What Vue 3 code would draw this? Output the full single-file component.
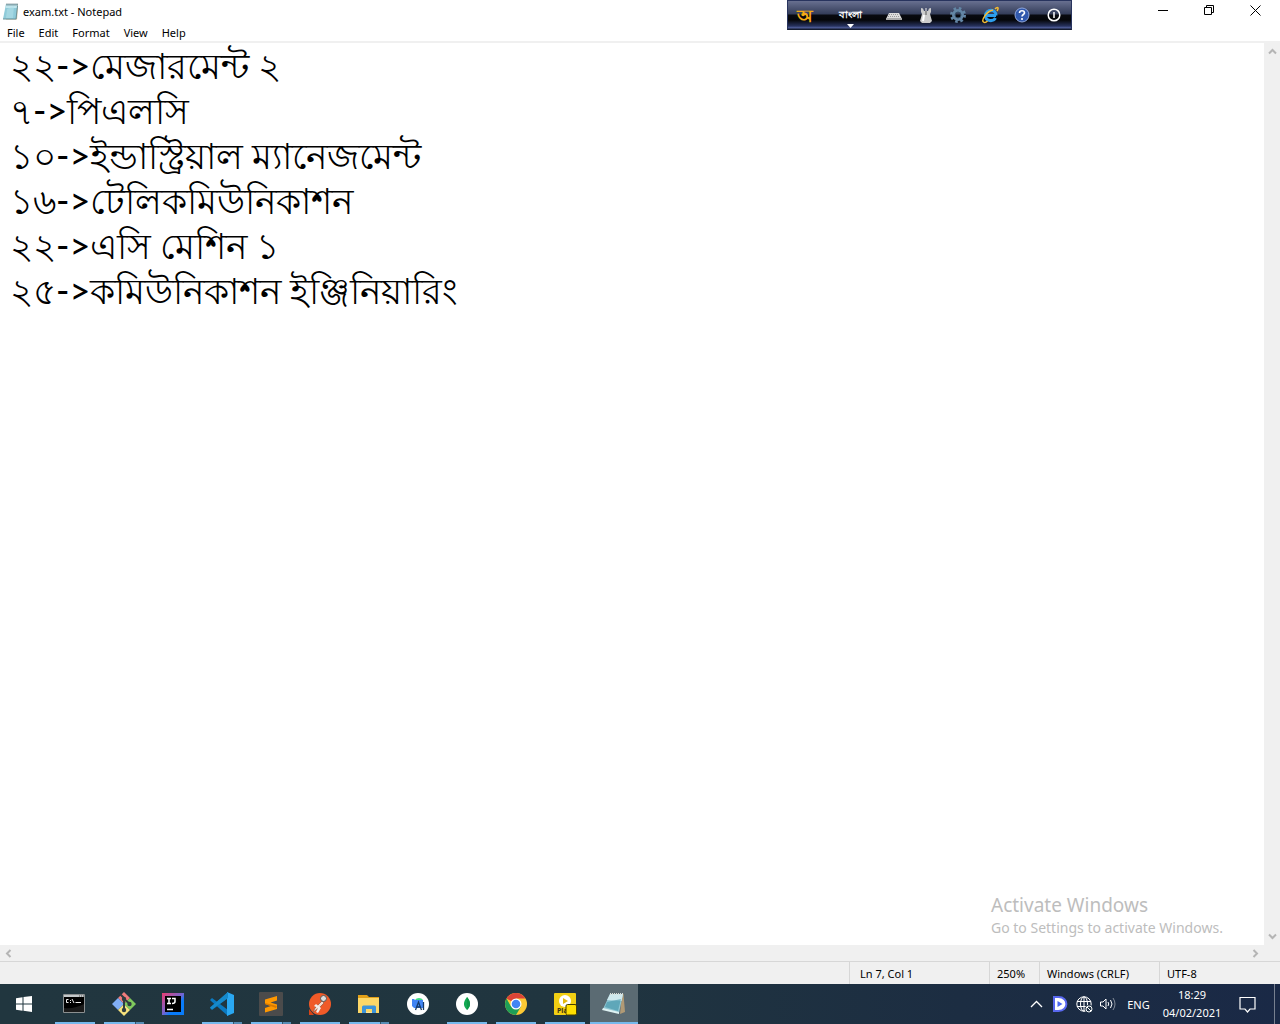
<script setup>
import { ref } from 'vue'

const text = ref(`২২->মেজারমেন্ট ২
৭->পিএলসি
১০->ইন্ডাস্ট্রিয়াল ম্যানেজমেন্ট
১৬->টেলিকমিউনিকাশন
২২->এসি মেশিন ১
২৫->কমিউনিকাশন ইঞ্জিনিয়ারিং
`)

const menus = ['File', 'Edit', 'Format', 'View', 'Help']

const apps = [
  { id: 'cmd', name: 'Command Prompt', state: 'open' },
  { id: 'git', name: 'Git Bash', state: 'multi' },
  { id: 'idea', name: 'IntelliJ IDEA', state: '' },
  { id: 'code', name: 'Visual Studio Code', state: 'multi' },
  { id: 'sublime', name: 'Sublime Text', state: 'multi' },
  { id: 'postman', name: 'Postman', state: 'open' },
  { id: 'folder', name: 'File Explorer', state: 'multi' },
  { id: 'studio', name: 'Android Studio', state: '' },
  { id: 'mongo', name: 'MongoDB Compass', state: 'open' },
  { id: 'chrome', name: 'Google Chrome', state: 'open' },
  { id: 'player', name: 'Player', state: 'open' },
  { id: 'notepad', name: 'Notepad', state: 'active' },
]
</script>

<template>
  <div class="desktop">
    <header class="titlebar">
      <svg class="app-icon" width="16" height="18" viewBox="0 0 16 18">
        <path d="M3 1h12l-1 15.500H3z" fill="#c9b58c" />
        <path d="M3 1h11.500L13 16H0z" fill="#8fcbd9" />
        <path d="M3 1h11.500l-.4 4H2.500z" fill="#bfe5ed" />
        <path d="M4 6l7-3-1 12H3z" fill="#b2dfe8" opacity=".6" />
        <path d="M3.500 1.500h11" stroke="#4e6870" stroke-width="2" stroke-dasharray="1 1" />
        <path d="M0 16h13l1.500-13" fill="none" stroke="#6a929c" />
      </svg>
      <h1>exam.txt - Notepad</h1>
      <div class="controls">
        <button aria-label="Minimize"><svg width="11" height="11"><path d="M0 5.500h10" stroke="#000" /></svg></button>
        <button aria-label="Restore"><svg width="11" height="11" fill="none" stroke="#000"><path d="M.5 2.500h7v7h-7zM2.500 2.500v-2h7v7h-2" /></svg></button>
        <button aria-label="Close"><svg width="11" height="11" stroke="#000"><path d="M.5.5l10 10M10.500.5l-10 10" /></svg></button>
      </div>
    </header>

    <nav class="menubar">
      <button v-for="m in menus" :key="m">{{ m }}</button>
    </nav>

    <main class="editor">
      <textarea v-model="text" aria-label="Text editor" spellcheck="false" wrap="off"></textarea>
      <div class="vscroll">
        <button aria-label="Scroll up"><svg width="9" height="7" class="arrow"><path d="M1 5.500l3.500-3.500L8 5.500" /></svg></button>
        <button aria-label="Scroll down"><svg width="9" height="7" class="arrow"><path d="M1 1.500l3.500 3.500L8 1.500" /></svg></button>
      </div>
      <aside class="watermark">
        <strong>Activate Windows</strong>
        <span>Go to Settings to activate Windows.</span>
      </aside>
    </main>

    <div class="hscroll">
      <button aria-label="Scroll left"><svg width="7" height="9" class="arrow"><path d="M5.500 1L2 4.500 5.500 8" /></svg></button>
      <button aria-label="Scroll right"><svg width="7" height="9" class="arrow"><path d="M1.500 1L5 4.500 1.500 8" /></svg></button>
    </div>

    <footer class="statusbar">
      <span class="position">Ln 7, Col 1</span>
      <span class="zoom">250%</span>
      <span class="ending">Windows (CRLF)</span>
      <span class="encoding">UTF-8</span>
    </footer>

    <div class="keyboard-bar">
      <button class="logo">অ</button>
      <button class="lang">বাংলা<svg width="7" height="4"><path d="M0 0h7L3.500 4z" fill="#fff" /></svg></button>
      <button aria-label="Layout">
        <svg width="16" height="16" viewBox="0 0 16 16">
          <path d="M3 6h10l2.500 5H.5z" fill="#ddd" /><path d="M0 11h16v2H0z" fill="#aaa" />
          <path d="M3 7.500h10M2 9.500h12" stroke="#999" stroke-dasharray="1 1" />
        </svg>
      </button>
      <button aria-label="Mouse">
        <svg width="16" height="16" viewBox="0 0 16 16">
          <path d="M3 1l2 .5L6 4h4l1-2.500 2-.5v4l-1 2 2 7-2 2H4l-2-2 2-7-1-2z" fill="#ccc" />
          <path d="M6 8l-1 6" stroke="#fff" stroke-width="2" /><path d="M8 1v3" stroke="#eee" /><path d="M8 4v4" stroke="#555" />
        </svg>
      </button>
      <button aria-label="Options">
        <svg width="16" height="16" viewBox="0 0 16 16" fill="none" stroke="#6386a5">
          <circle cx="8" cy="8" r="6.500" stroke-width="3" stroke-dasharray="2.500 2.605" />
          <circle cx="8" cy="8" r="4.500" stroke-width="3" /><circle cx="8" cy="8" r="3" stroke="#38526b" />
        </svg>
      </button>
      <button aria-label="Website">
        <svg width="18" height="18" viewBox="0 0 18 18" fill="none">
          <path d="M15 9.500H5M15 9.500c0-7-10-7-10.500 0 0 6 7.500 6.500 10 2.500" stroke="#2d9eec" stroke-width="3" />
          <path d="M14 3c3-3 4-1 2 2M12 4C6 5 0 14 2.500 16c1 .7 3 0 4-1" stroke="#f6bd32" stroke-width="1.500" />
        </svg>
      </button>
      <button aria-label="Help">
        <svg width="16" height="16" viewBox="0 0 16 16">
          <circle cx="8" cy="8" r="7" fill="#3159ad" stroke="#91a7db" />
          <path d="M5.500 6c0-3 5-3 5 0 0 1.500-2.500 1.500-2.500 3.500M8 11v2" fill="none" stroke="#fff" stroke-width="1.600" />
        </svg>
      </button>
      <button aria-label="Exit">
        <svg width="14" height="14" viewBox="0 0 14 14" fill="none" stroke="#fff" stroke-width="1.500">
          <circle cx="7" cy="7" r="5.800" /><path d="M7 4v6" />
        </svg>
      </button>
    </div>

    <div class="taskbar">
      <button class="start" aria-label="Start">
        <svg width="16" height="16" viewBox="0 0 16 16" fill="#fff"><path d="M0 2.200L6.500 1.300V7.500H0zM7.500 1.100L16 0v7.500H7.500zM0 8.500h6.500v6.200L0 13.800zM7.500 8.500H16V16l-8.500-1.200z" /></svg>
      </button>
      <button v-for="app in apps" :key="app.id" class="task" :class="app.state" :aria-label="app.name">
        <svg width="24" height="24" viewBox="0 0 24 24">
          <g v-if="app.id === 'cmd'">
            <path d="M.5 2.500h21v18H.5z" fill="#000" stroke="#8b8f90" /><path d="M1 3h20v2H1z" fill="#c4c8ca" />
            <path d="M16 4h1m1 0h1m1 0h1" stroke="#555" />
            <path d="M5.500 7.500h-2v3h2M7.500 8v1m0 1v1M9 7l2 4M12.500 10.500H18" fill="none" stroke="#eee" />
            <path d="M1 16c7 1 14-1 20-4v8H1z" fill="#1b1b1b" />
          </g>
          <g v-else-if="app.id === 'git'">
            <path d="M12 0l6 6-6 6-6-6z" fill="#f27c7c" /><path d="M18 6l6 6-6 6-6-6z" fill="#7fc95d" />
            <path d="M6 6l6 6-6 6-6-6z" fill="#80aef5" /><path d="M12 12l6 6-6 6-6-6z" fill="#f6e17c" />
            <path d="M8 2l4 4v12M12 7l6 5" fill="none" stroke="#303c40" stroke-width="2" />
            <circle cx="12" cy="7" r="2.200" fill="#303c40" /><circle cx="12" cy="18" r="2.200" fill="#303c40" /><circle cx="17.500" cy="12" r="2.200" fill="#303c40" />
          </g>
          <g v-else-if="app.id === 'idea'">
            <defs><linearGradient id="idea" x2="1" y2="1"><stop stop-color="#ed3d70" /><stop offset=".5" stop-color="#7065d2" /><stop offset=".65" stop-color="#087cfa" /></linearGradient></defs>
            <path d="M1 1h22v22H1z" fill="url(#idea)" /><path d="M4 4h16v16H4z" fill="#000" />
            <path d="M6 6.500h4M6 11.500h4M8 6v5M11 6.500h3v3q0 2-3 2M6 17.500h6" fill="none" stroke="#fff" stroke-width="1.500" />
          </g>
          <g v-else-if="app.id === 'code'">
            <path d="M0 8l2-2 16 12v6L1 9z" fill="#0b7ac2" /><path d="M0 16l2 2L18 6V0L1 15z" fill="#0875b9" />
            <path d="M17 0l7 3v18l-7 3z" fill="#2aa8f2" /><path d="M0 15.500l2 2L18 6V0z" fill="#168acb" />
          </g>
          <g v-else-if="app.id === 'sublime'">
            <rect width="24" height="24" rx="1" fill="#4b4b4b" />
            <path d="M18 4v4.500L11.500 10.500 18 12.500V17L6 20.500V16l6-2-6-2V7.500z" fill="#ff9800" />
            <path d="M6 11l12 3-1 2-11-4z" fill="#d97900" />
          </g>
          <g v-else-if="app.id === 'postman'">
            <circle cx="12" cy="12" r="11" fill="#f05a28" /><path d="M1 17v6h5z" fill="#d64418" />
            <path d="M14 9l-7 7-2 4 6-4 5-5z" fill="#f8d7c8" stroke="#8b5b48" stroke-width=".7" />
            <circle cx="15.500" cy="6.500" r="3" fill="#ddd" stroke="#555" /><path d="M8 12l5 4-3 5-2-1 2-4-4-2z" fill="#eee" />
          </g>
          <g v-else-if="app.id === 'folder'">
            <path d="M1 3h9l2 2h10v5H1z" fill="#e2a018" /><path d="M1 6h21v15H1z" fill="#fcd767" />
            <path d="M5 21v-6q0-1.500 1.500-1.500h11q1.500 0 1.500 1.500v6h-4v-4H9v4z" fill="#3c94da" /><path d="M9 20h6v1H9z" fill="#ffe69c" />
          </g>
          <g v-else-if="app.id === 'studio'">
            <circle cx="12" cy="12" r="11" fill="#fff" /><path d="M9 8a4.500 3.500 0 018 0z" fill="#3ddc84" />
            <path d="M6 7h2l1 1h8v8H8l-2-2z" fill="#4285f4" /><path d="M9.500 18l3-8 3 8M10.500 15h4M17.500 10v8" fill="none" stroke="#173b69" stroke-width="1.300" />
          </g>
          <g v-else-if="app.id === 'mongo'">
            <circle cx="12" cy="12" r="11" fill="#fff" /><path d="M12 5c-5 6-3 10 0 13 3-3 5-7 0-13z" fill="#13aa52" />
            <path d="M12 5v13c4-4 4-8 0-13z" fill="#0f9a49" />
          </g>
          <g v-else-if="app.id === 'chrome'">
            <circle cx="12" cy="12" r="11" fill="#fcc934" />
            <path d="M12 12L2.500 6.500A11 11 0 0121.500 6.500H12z" fill="#db4437" />
            <path d="M2.500 6.500A11 11 0 0012 23l5-8.500L12 12 7 14.500z" fill="#1e9e57" />
            <circle cx="12" cy="12" r="5.500" fill="#fff" /><circle cx="12" cy="12" r="4.300" fill="#4285f4" />
          </g>
          <g v-else-if="app.id === 'player'">
            <rect x="1" y="1" width="22" height="22" rx="1" fill="#f2cf13" /><circle cx="12" cy="9" r="6" fill="#fff" />
            <path d="M10 6l5 3-5 3z" fill="#e5b90d" />
            <text x="4" y="21" font-size="7" font-weight="700" fill="#3b3514">Pla</text>
            <rect x="13" y="12.500" width="10.500" height="10.500" rx="1.500" fill="#ffdf00" stroke="#443c00" />
          </g>
          <g v-else>
            <path d="M20 2h1.500L23 20l-5 2z" fill="#b19a75" /><path d="M8 2h13l-4 19-16-4z" fill="#8fc6d3" />
            <path d="M8 2h13l-1.500 7L5 8z" fill="#cfe9ee" /><path d="M5 10l14-3-3 12-13-4z" fill="#3f93a8" opacity=".6" />
            <path d="M8 2h13" stroke="#d7ded9" stroke-width="2" stroke-dasharray="1 1" /><path d="M0 18l17 4v-2L1 16z" fill="#def2f3" />
          </g>
        </svg>
      </button>

      <div class="tray">
        <button class="chevron" aria-label="Show hidden icons"><svg width="13" height="8" fill="none" stroke="#fff" stroke-width="1.300"><path d="M1 7l5.500-5.500L12 7" /></svg></button>
        <button class="tray-app" aria-label="Download manager"><svg width="16" height="16" viewBox="0 0 16 16"><path d="M2 1h4.500c10.500 0 10.500 14 0 14H2z" fill="#fff" stroke="#5968ef" stroke-width="2" /><path d="M5.500 5l5 3-5 3z" fill="#4b68f1" /></svg></button>
        <button class="network" aria-label="Network"><svg width="17" height="17" viewBox="0 0 17 17" fill="none" stroke="#fff"><circle cx="8" cy="8" r="7.200" /><ellipse cx="8" cy="8" rx="3.500" ry="7.200" /><path d="M8 1v14M1 5.500h14M1 10.500h14" /><circle cx="13" cy="13" r="4" fill="#1b2e42" stroke="none" /><circle cx="13" cy="13" r="3" /><path d="M11 11l4 4" /></svg></button>
        <button class="volume" aria-label="Volume"><svg width="17" height="14" viewBox="0 0 17 14" fill="none" stroke="#fff"><path d="M.5 5h2.500L6 2v10L3 9H.5zM8 5q1.500 2 0 4M10.500 3q3 4 0 8" /><path d="M13 1q4 6 0 12" opacity=".45" /></svg></button>
        <button class="input-lang">ENG</button>
        <button class="clock"><time>18:29</time><time>04/02/2021</time></button>
        <button class="notice" aria-label="Notifications"><svg width="17" height="17" fill="none" stroke="#fff" stroke-width="1.200"><path d="M1 1.500h15v11.500h-5l-2.500 3-2.500-3H1z" /></svg></button>
        <button class="peek" aria-label="Show desktop"></button>
      </div>
    </div>
  </div>
</template>

<style>
body { margin: 0; }
</style>

<style scoped>
.desktop {
  position: relative;
  display: flex;
  flex-direction: column;
  height: 100vh;
  background: #fff;
  color: #000;
  font-family: "Noto Sans", "Open Sans", sans-serif;
  font-size: 11px;
  overflow: hidden;
}
button {
  display: flex;
  align-items: center;
  justify-content: center;
  padding: 0;
  border: 0;
  background: none;
  color: inherit;
  font: inherit;
}
svg { flex: none; }

.titlebar { display: flex; align-items: center; height: 23px; padding-left: 3px; }
.titlebar h1 { margin: 0 0 0 4px; font-size: 11px; font-weight: 400; line-height: 23px; }
.controls { display: flex; margin-left: auto; padding-right: 2px; }
.controls button { width: 46px; height: 20px; margin-bottom: 3px; }

.menubar { display: flex; height: 18px; padding-left: 7px; gap: 14px; border-bottom: 2px solid #f0f0f0; line-height: 18px; }
.menubar button { height: 20px; }

.editor { position: relative; display: flex; flex: 1; min-height: 0; }
textarea {
  flex: 1;
  min-width: 0;
  padding: 0 10px;
  border: 0;
  outline: 0;
  resize: none;
  overflow: hidden;
  color: #000;
  font-family: Lato, "Noto Sans", sans-serif;
  font-size: 36px;
  font-weight: 500;
  line-height: 45px;
}
.vscroll { display: flex; flex-direction: column; justify-content: space-between; width: 16px; background: #f0f0f0; }
.vscroll button, .hscroll button { width: 16px; height: 17px; }
.arrow { fill: none; stroke: #b5b5b5; stroke-width: 2; }
.watermark { position: absolute; right: 53px; bottom: 6px; display: flex; flex-direction: column; width: 236px; color: #bdbdbd; white-space: nowrap; }
.watermark strong { font-size: 19px; font-weight: 400; line-height: 24px; }
.watermark span { font-size: 14px; line-height: 22px; }
.hscroll { display: flex; justify-content: space-between; height: 16px; padding-right: 17px; background: #f0f0f0; }

.statusbar { display: flex; justify-content: flex-end; height: 22px; border-top: 1px solid #d7d7d7; background: #f0f0f0; line-height: 23px; }
.statusbar span { box-sizing: border-box; padding-left: 7px; border-left: 1px solid #d7d7d7; white-space: nowrap; }
.statusbar .position { width: 140px; padding-left: 10px; }
.statusbar .zoom { width: 50px; }
.statusbar .ending { width: 120px; }
.statusbar .encoding { width: 121px; }

.keyboard-bar {
  position: absolute;
  top: 0;
  right: 208px;
  display: flex;
  align-items: center;
  box-sizing: border-box;
  width: 285px;
  height: 30px;
  border: 1px solid #28345e;
  border-bottom-color: #141c30;
  background: linear-gradient(#687090 0, #343d59 13px, #080a10 14px, #050609 19px, #26315d 25px, #5362a0 27px, #101525 28px);
  color: #fff;
}
.keyboard-bar button { width: 32px; height: 28px; }
.keyboard-bar .logo { width: 34px; color: #f5ab14; font-size: 18px; font-weight: 700; line-height: 28px; }
.keyboard-bar .lang { flex-direction: column; width: 56px; padding-top: 2px; font-size: 10px; font-weight: 600; line-height: 20px; }

.taskbar { display: flex; height: 40px; background: linear-gradient(90deg, #21363f, #20353f 45%, #1c2d42 75%, #1a2946); color: #fff; }
.start { width: 48px; margin-right: 2px; }
.task { position: relative; width: 49px; }
.task.open::after, .task.multi::after { content: ""; position: absolute; left: 5px; right: 4px; bottom: 0; height: 2px; background: #76b9ed; }
.task.multi::after { background: linear-gradient(90deg, #76b9ed 31px, #36566a 31px, #36566a 32px, #578db5 32px); }
.task.active { border-bottom: 2px solid #76b9ed; padding-top: 2px; width: 48px; margin-left: 1px; background: #5b6b73; }
.tray { display: flex; margin-left: auto; }
.chevron { width: 24px; }
.tray-app, .network, .volume { width: 24px; }
.input-lang { width: 37px; }
.clock { flex-direction: column; width: 70px; line-height: 18px; }
.notice { width: 41px; }
.peek { width: 12px; }
.peek::before { content: ""; width: 1px; height: 40px; background: #77808f; }
</style>
